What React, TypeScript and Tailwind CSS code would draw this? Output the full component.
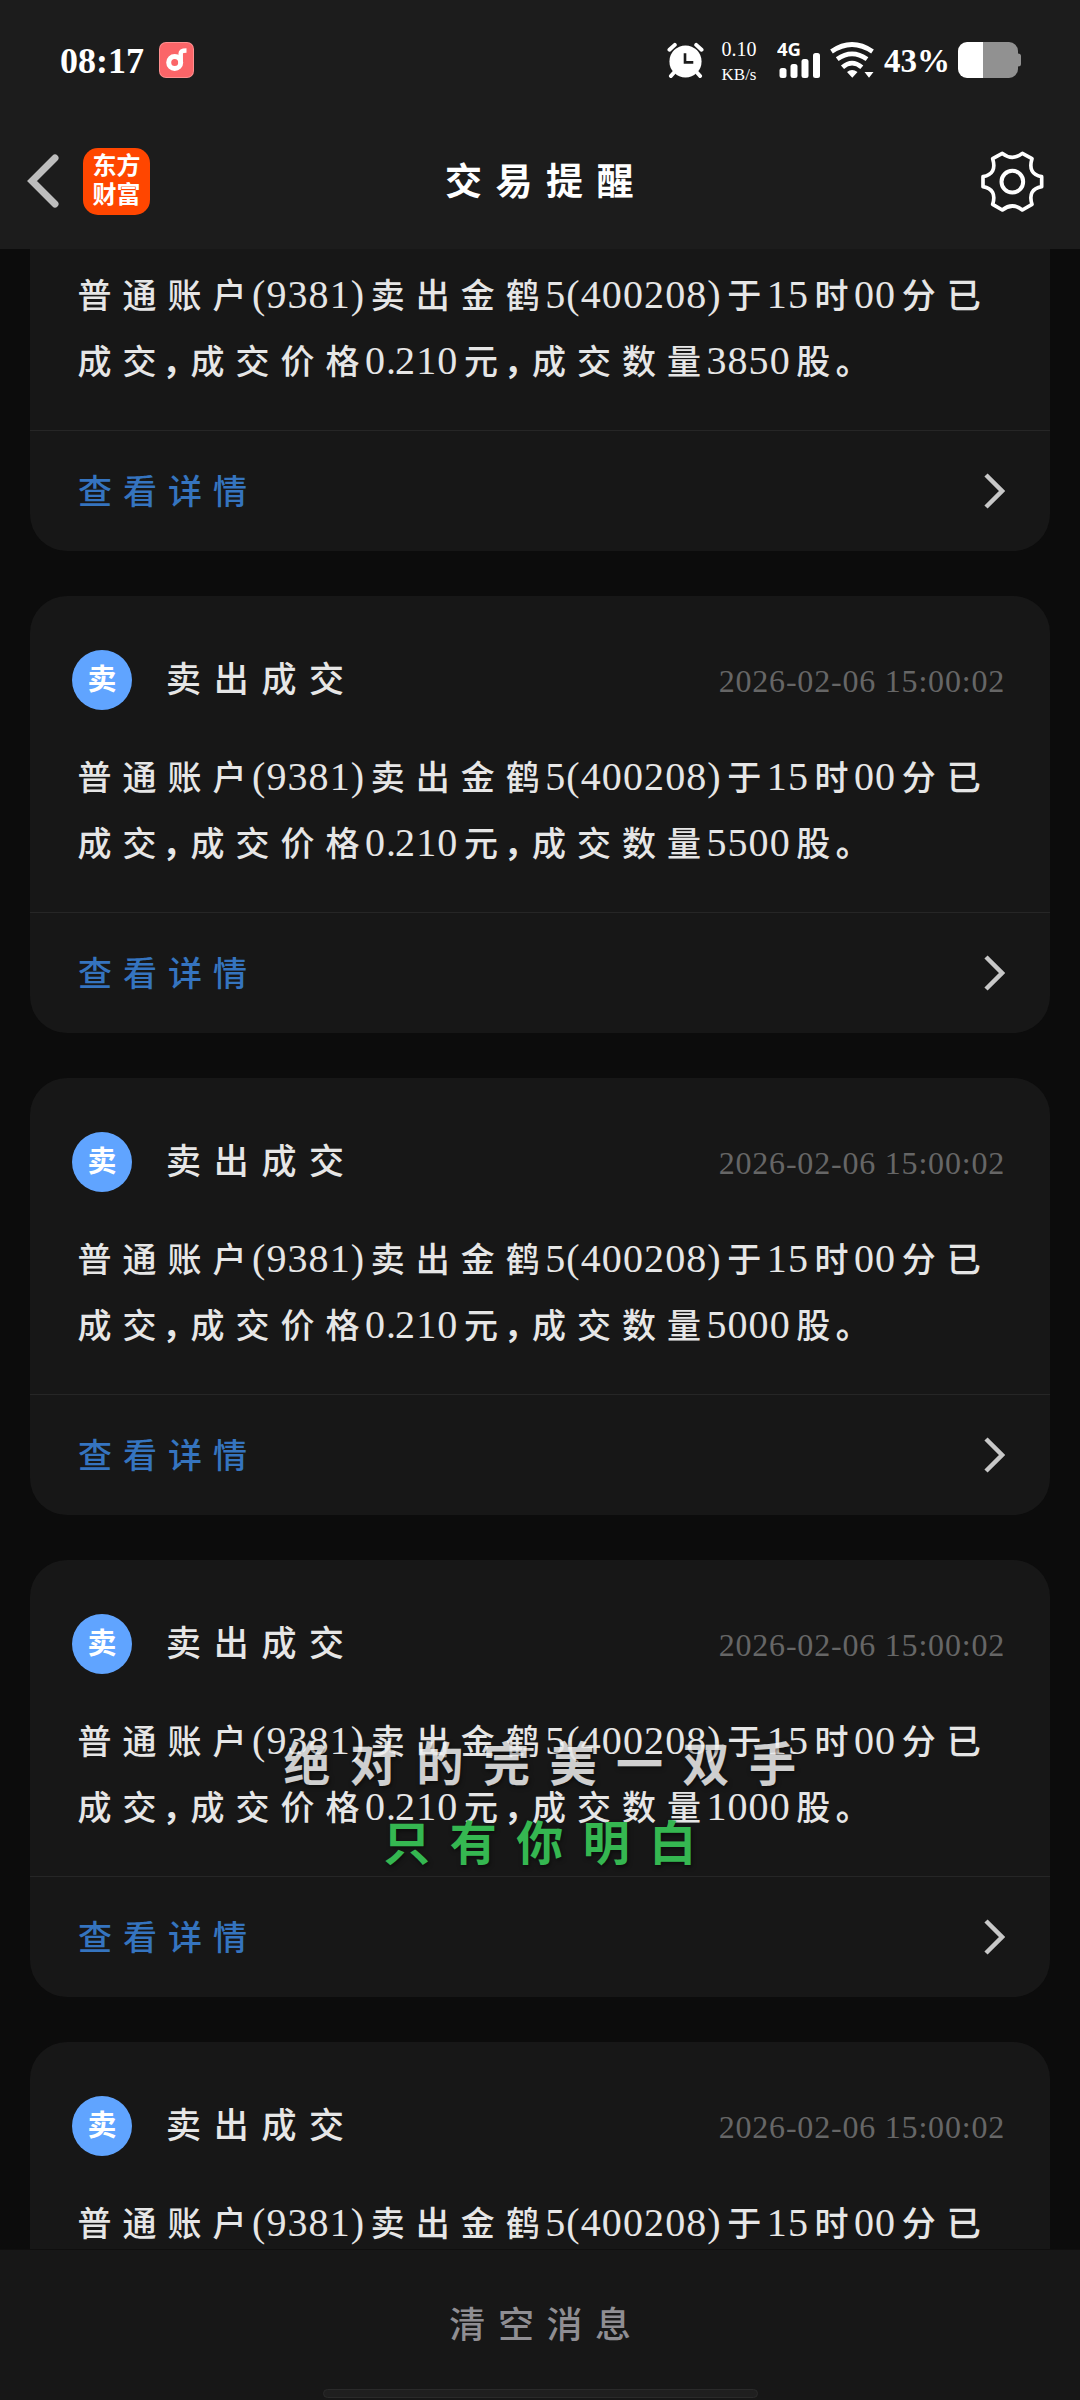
import React from "react";

type Trade = {
	count: number;
	time: string;
};

const trades: Trade[] = [
	{ count: 3850, time: "2026-02-06 15:00:02" },
	{ count: 5500, time: "2026-02-06 15:00:02" },
	{ count: 5000, time: "2026-02-06 15:00:02" },
	{ count: 1000, time: "2026-02-06 15:00:02" },
	{ count: 5000, time: "2026-02-06 15:00:02" },
];

// Digits and Chinese runs use different sizes and spacing
function RichLine({ text }: { text: string }) {
	const parts = text.match(/，|。|\.|[0-9()]+|[^0-9().，。]+/g) || [];

	return (
		<div className="h-[66px] text-[40px] leading-[66px] whitespace-nowrap">
			{parts.map((part, index) => {
				if (part === "，") {
					return (
						<span
							key={index}
							className="inline-block w-[23px] text-[34px] leading-none font-bold"
						>
							{part}
						</span>
					);
				}
				if (part === "。") {
					return (
						<span key={index} className="text-[34px] leading-none font-bold">
							{part}
						</span>
					);
				}
				if (part === ".") {
					return (
						<span key={index} className="inline-block w-[9px] leading-none">
							{part}
						</span>
					);
				}
				if (/^[0-9()]/.test(part)) {
					return (
						<span key={index} className="leading-none tracking-[1.1px]">
							{part}
						</span>
					);
				}
				return (
					<span
						key={index}
						className="pl-[5.500px] text-[34px] leading-none font-medium tracking-[11px]"
					>
						{part.slice(0, -1)}
						<span className="tracking-[5.500px]">{part.slice(-1)}</span>
					</span>
				);
			})}
		</div>
	);
}

function StatusBar() {
	return (
		<div className="flex h-[120px] items-center pr-[59px] pl-[60px]">
			<span className="pt-[2px] text-[36px] leading-[1.5] font-bold">
				08:17
			</span>
			<svg className="ml-[15px] h-9 w-[35px]" viewBox="0 0 35 36">
				<rect width="35" height="36" rx="7" fill="#ff8f8f" />
				<rect x="1" y="1" width="33" height="34" rx="6" fill="#fb6568" />
				<circle
					cx="15.700"
					cy="20.500"
					r="6"
					fill="none"
					stroke="#fff"
					strokeWidth="5"
				/>
				<path
					d="M21.700 21V11.500q0-3 5.800-3"
					fill="none"
					stroke="#fff"
					strokeWidth="4.500"
				/>
			</svg>

			<div className="ml-auto flex items-center">
				<svg className="h-9 w-[37px]" viewBox="0 0 38 36" fill="none">
					<circle cx="19" cy="19.500" r="16.500" fill="#fff" />
					<path
						d="M2.500 7.500L8 2.500M35.500 7.500L30 2.500M7 31L4 34.500M31 31l3 3.500"
						stroke="#fff"
						strokeWidth="4"
						strokeLinecap="round"
					/>
					<path d="M18.500 11v9.500h8.500" stroke="#1c1c1c" strokeWidth="2.700" />
				</svg>
				<div className="mt-1 ml-[17px] flex w-9 flex-col items-center text-[20px] leading-[26px]">
					<span>0.10</span>
					<span className="text-[17px]">KB/s</span>
				</div>
				<svg className="ml-5 h-9 w-11" viewBox="0 0 44 36" fill="#fff">
					<text
						x="0"
						y="13.500"
						fontFamily="Open Sans, sans-serif"
						fontSize="18"
						fontWeight="700"
						textLength="24"
						lengthAdjust="spacingAndGlyphs"
					>
						4G
					</text>
					<rect x="2.500" y="26" width="7" height="10" rx="2.500" />
					<rect x="13.500" y="22" width="7" height="14" rx="2.500" />
					<rect x="24.500" y="17" width="7" height="19" rx="2.500" />
					<rect x="36" y="11" width="7" height="25" rx="2.500" />
				</svg>
				<svg className="ml-[9px] h-9 w-11" viewBox="0 0 44 36" fill="none">
					<g stroke="#fff" strokeWidth="4.700">
						<path d="M1.500 9.500Q22-4.500 42.500 9.500" />
						<path d="M7.200 17.200Q22 6.500 37 17.200" />
						<path d="M12.500 25.200Q22 17 31.800 25.200" />
					</g>
					<path
						d="M17 30Q22 26 27.500 30L22.300 35.700ZM34.500 30h9L39 35.700Z"
						fill="#fff"
					/>
				</svg>
				<span className="ml-[10px] w-[66px] pt-[3px] text-[33px] leading-[1.5] font-bold">
					43%
				</span>
				<svg className="ml-2 h-9 w-[63px]" viewBox="0 0 63 36">
					<path
						d="M25 0h26a9 9 0 0 1 9 9v2.500q3 0 3 2.500v8q0 2.500-3 2.500v2.500a9 9 0 0 1-9 9H25z"
						fill="#919191"
					/>
					<path d="M25 0H9a9 9 0 0 0-9 9v18a9 9 0 0 0 9 9h16z" fill="#fff" />
				</svg>
			</div>
		</div>
	);
}

function Header() {
	return (
		<div className="grid h-[129px] grid-cols-[1fr_auto_1fr] items-center pr-9 pb-[7px] pl-[27px]">
			<div className="flex items-center">
				<svg className="h-[54px] w-8" viewBox="0 0 32 54" fill="none">
					<path
						d="M28 4L5 27L28 50"
						stroke="#bdbdbd"
						strokeWidth="7"
						strokeLinecap="round"
					/>
				</svg>
				<div className="ml-6 flex h-[67px] w-[67px] flex-col items-center justify-center rounded-[15px] bg-[#ff4600] text-[24px] leading-[29px] font-bold">
					<span>东方</span>
					<span>财富</span>
				</div>
			</div>
			<h1 className="pt-1 pl-[21px] text-[37px] leading-[1.5] font-bold tracking-[13.500px]">
				交易提醒
			</h1>
			<svg
				className="h-[61px] w-[63px] justify-self-end"
				viewBox="33 29 189 183"
				fill="none"
				stroke="#fff"
				strokeLinejoin="round"
			>
				<path
					d="M97 36Q127 60 157 36L186 52Q172 98 215 106V136Q172 144 186 189L157 206Q127 182 97 206L68 189Q82 144 39 136V106Q82 98 68 52Z"
					strokeWidth="11"
				/>
				<circle cx="127" cy="121" r="32.500" strokeWidth="12" />
			</svg>
		</div>
	);
}

function TradeCard({ trade }: { trade: Trade }) {
	return (
		<div className="h-[437px] shrink-0 rounded-[37px] bg-[#171717] text-[#e6e6e6]">
			<div className="h-[316px] pt-[54px] pr-[45px] pl-[42px]">
				<div className="flex h-[60px] items-center">
					<div className="flex h-[60px] w-[60px] items-center justify-center rounded-full bg-[#60a4ff] pt-[2px] text-[29px] leading-[1.5] font-bold text-white">
						卖
					</div>
					<span className="ml-[34px] pt-[3px] text-[35px] leading-[1.5] font-medium tracking-[12.700px]">
						卖出成交
					</span>
					<span className="ml-auto pt-[2px] text-[32px] leading-[1.5] tracking-[0.800px] text-[#666666]">
						{trade.time}
					</span>
				</div>
				<div className="mt-[34px]">
					<RichLine text="普通账户(9381)卖出金鹤5(400208)于15时00分已" />
					<RichLine
						text={"成交，成交价格0.210元，成交数量" + trade.count + "股。"}
					/>
				</div>
			</div>
			<div className="flex h-[121px] items-center justify-between border-t border-[#262626] pr-[45px] pl-[48px]">
				<span className="pt-[2px] text-[34px] leading-[1.5] font-medium tracking-[11px] text-[#3574bf]">
					查看详情
				</span>
				<svg className="h-9 w-[21px]" viewBox="0 0 21 36" fill="none">
					<path d="M2 2L18 18L2 34" stroke="#c8c8c8" strokeWidth="4.500" />
				</svg>
			</div>
		</div>
	);
}

// Floating lyrics of the music player, drawn over every app
function Lyrics() {
	return (
		<div className="pointer-events-none absolute top-[1726px] left-0 flex w-full flex-col items-center pl-[19px] text-[47px] leading-[79px] font-bold tracking-[19.500px] [text-shadow:1px_2px_4px_rgba(0,0,0,0.5)]">
			<span className="text-white/80">绝对的完美一双手</span>
			<span className="text-[#35b751]">只有你明白</span>
		</div>
	);
}

export default function App() {
	return (
		<div className="relative flex h-[2400px] w-[1080px] flex-col overflow-hidden bg-[#0c0c0c] font-['Liberation_Serif','Noto_Sans_CJK_SC',serif] text-white">
			<div className="bg-[#1c1c1c]">
				<StatusBar />
				<Header />
			</div>

			{/* Message list, scrolled a little past the first card's title */}
			<div className="h-[2000px] overflow-hidden px-[30px]">
				<div className="-mt-[135px] flex flex-col gap-[45px]">
					{trades.map((trade, index) => (
						<TradeCard key={index} trade={trade} />
					))}
				</div>
			</div>

			{/* Bottom action */}
			<div className="flex h-[151px] flex-col items-center border-t border-[#0f0f0f] bg-[#171717]">
				<div className="flex h-[139px] items-center pt-3 pl-[13px] text-[36px] leading-[1.5] font-medium tracking-[12.600px] text-[#8f8e93]">
					清空消息
				</div>
				<div className="h-[9px] w-[435px] rounded-full border border-[#2a2a2a] bg-[#1f1f1f]"></div>
			</div>

			<Lyrics />
		</div>
	);
}
